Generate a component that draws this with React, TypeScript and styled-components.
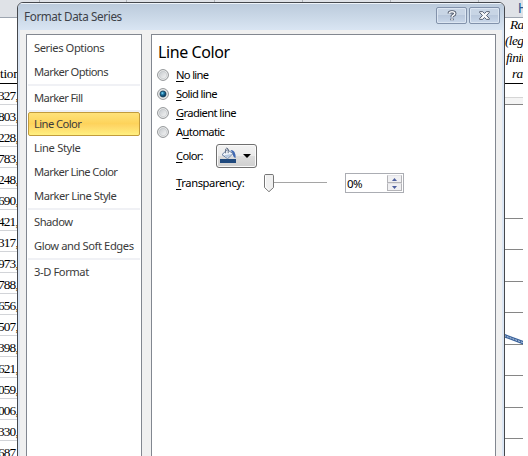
import React, { useState } from 'react';
import styled, { createGlobalStyle, css } from 'styled-components';

const GlobalStyle = createGlobalStyle`
  body { margin: 0; background: #fff; overflow: hidden; }
  *, *::before, *::after { box-sizing: border-box; }
`;

const Screen = styled.div`
  position: relative;
  width: 523px;
  height: 456px;
  overflow: hidden;
  background: #fff;
  color: #000;
  font-family: 'Noto Sans', sans-serif;
  font-size: 12px;
`;

const ColumnHeaders = styled.div`
  display: grid;
  grid-template-columns: 39px 88px 88px 88px 88px 88px 44px;
  height: 18px;
  background: #dfe2e7;
  border-bottom: 1px solid #9da5b0;
`;

const ColumnHeader = styled.div`
  border-right: 1px solid #b1b5ba;
  padding-left: 39px;
  font: 14px/17px 'Liberation Sans', sans-serif;
  color: #2a5a94;
  overflow: hidden;

  &:last-child { border-right: 0; }
`;

const SheetBody = styled.div`
  display: flex;
  justify-content: space-between;
`;

const NumberColumn = styled.div`
  width: 18px;
  font: 13.3px/20px 'Liberation Serif', serif;
`;

const numberText = css`
  display: flex;
  white-space: nowrap;
  overflow: hidden;
`;

const NumberHead = styled.div`
  ${numberText}
  height: 66px;
  align-items: flex-end;
  border-bottom: 1px solid #000;
  line-height: 18px;
  letter-spacing: -0.3px;
`;

const NumberCell = styled.div`
  ${numberText}
  justify-content: flex-end;
  height: 21px;
  padding-top: 2px;
  letter-spacing: -0.8px;
  border-bottom: 1px solid #d2d4d8;
`;

const RightColumn = styled.div`
  width: 18px;
`;

const RatioHead = styled.div`
  height: 66px;
  display: flex;
  flex-direction: column;
  border-bottom: 1px solid #000;
  font: italic 13.3px/16.3px 'Liberation Serif', serif;
  letter-spacing: -0.6px;
  white-space: nowrap;
  overflow: hidden;
`;

const RatioLine = styled.span<{ $indent: number }>`
  padding-left: ${(p) => p.$indent}px;

  &:first-child { margin-top: -1px; }
`;

const ChartDrawing = styled.svg`
  display: block;
`;

const Dialog = styled.section`
  position: absolute;
  left: 17px;
  top: 2px;
  width: 488px;
  height: 470px;
  border: 1px solid #45484d;
  border-radius: 6px 6px 0 0;
  background: #f0f0f0;
  box-shadow: inset 2px 0 #dbe6f4, inset -2px 0 #dbe6f4;
  overflow: hidden;
`;

const TitleBar = styled.header`
  height: 27px;
  display: flex;
  justify-content: space-between;
  padding: 4px 4px 0 6px;
  border-top: 1px solid #eef4fa;
  background: linear-gradient(#bccbdc, #cad8e7 50%, #d9e5f3);
`;

const Title = styled.h1`
  margin: 0;
  font-size: 11.7px;
  line-height: 16px;
  font-weight: 400;
  letter-spacing: -0.38px;
  color: #3d4148;
`;

const CaptionButtons = styled.div`
  display: flex;
  gap: 2px;
  margin-top: -1px;
`;

const CaptionButton = styled.button`
  width: 31px;
  height: 17px;
  padding: 0;
  display: flex;
  align-items: center;
  justify-content: center;
  border: 1px solid #8292ab;
  border-radius: 2px;
  background: linear-gradient(#c8d5e5 45%, #b9c8dc 50%, #cad8ea);
  box-shadow: inset 0 0 0 1px #dce6f2;
`;

const DialogBody = styled.div`
  display: flex;
  gap: 9px;
  padding: 4px 8px 0;
  height: 440px;
`;

const Categories = styled.nav`
  width: 116px;
  flex: none;
  padding: 1px;
  border: 1px solid #828790;
  background: #fff;
`;

const Category = styled.button<{ $active: boolean; $tracking: number }>`
  display: block;
  width: 112px;
  height: 24px;
  padding: 0 0 0 5px;
  border: 1px solid ${(p) => (p.$active ? '#c29b3c' : 'transparent')};
  border-radius: 2px;
  background: ${(p) => (p.$active ? 'linear-gradient(#ffe27a, #fdd35b 48%, #fed767 60%, #fff080)' : 'none')};
  font: 11.2px/22px 'Noto Sans', sans-serif;
  letter-spacing: ${(p) => p.$tracking}px;
  text-align: left;
  white-space: nowrap;
  color: #3b3b3b;
`;

const Divider = styled.div`
  height: 2px;
  background: #f0f1f5;
`;

const Panel = styled.main`
  width: 345px;
  flex: none;
  border: 1px solid #828790;
  background: #fff;
  padding: 5px 0 0 6px;
`;

const PanelTitle = styled.h2`
  margin: 0;
  height: 25px;
  font-size: 16px;
  line-height: 24px;
  font-weight: 400;
  letter-spacing: -0.4px;
`;

const RadioRow = styled.label`
  display: flex;
  align-items: center;
  gap: 7px;
  height: 19px;
`;

const RadioMark = styled.svg`
  flex: none;
  display: block;
  margin-left: -1px;
`;

const Text = styled.span<{ $tracking: number }>`
  font-size: 11.2px;
  line-height: 16px;
  letter-spacing: ${(p) => p.$tracking}px;
  white-space: nowrap;
`;

const Key = styled.u`
  text-underline-offset: 2px;
  text-decoration-thickness: 1px;
  text-decoration-skip-ink: none;
`;

const ColorRow = styled.div`
  display: flex;
  align-items: center;
  height: 25px;
  margin-top: 2px;
  padding-left: 18px;
`;

const Label = styled.div<{ $width: number }>`
  width: ${(p) => p.$width}px;
  display: flex;
`;

const ColorButton = styled.button`
  width: 41px;
  height: 24px;
  padding: 0 0 0 3px;
  display: flex;
  align-items: center;
  gap: 6px;
  border: 1px solid #707070;
  border-radius: 3px;
  background: linear-gradient(#f2f2f2, #ebebeb 48%, #dddddd 50%, #cfcfcf);
  box-shadow: inset 0 0 0 1px #fafafa;
`;

const TransparencyRow = styled.div`
  display: flex;
  align-items: center;
  height: 20px;
  margin-top: 5px;
  padding-left: 18px;
`;

const Slider = styled.svg`
  display: block;
  flex: none;
  margin-right: 17px;
`;

const Spinner = styled.div`
  width: 59px;
  height: 20px;
  display: flex;
  justify-content: space-between;
  padding: 1px;
  border: 1px solid #abadb3;
  background: #fff;
  line-height: 16px;
`;

const SpinnerValue = styled.span`
  font-size: 11.5px;
  line-height: 17px;
  letter-spacing: -0.6px;
`;

const SpinButtons = styled.div`
  display: grid;
  grid-template-rows: 8px 8px;
  width: 15px;
`;

const SpinButton = styled.button`
  display: flex;
  align-items: center;
  justify-content: center;
  padding: 0;
  border: 1px solid #b4b4b8;
  border-top-color: #e2e2e6;
  background: #f0f0f2;
`;

const cells = ['327', '803', '228', '783', '248', '690', '421', '317', '973', '788', '656', '507', '398', '621', '059', '006', '330', '687'];

const categoryGroups: [string, number][][] = [
  [['Series Options', -0.42], ['Marker Options', -0.61]],
  [['Marker Fill', -0.63]],
  [['Line Color', -0.57], ['Line Style', -0.35], ['Marker Line Color', -0.62], ['Marker Line Style', -0.5]],
  [['Shadow', -0.5], ['Glow and Soft Edges', -0.42]],
  [['3-D Format', -0.42]],
];

const lineOptions = [
  { before: '', key: 'N', after: 'o line', tracking: -0.68 },
  { before: '', key: 'S', after: 'olid line', tracking: -0.66 },
  { before: '', key: 'G', after: 'radient line', tracking: -0.6 },
  { before: 'A', key: 'u', after: 'tomatic', tracking: -0.62 },
];

const gridLines = [218, 249, 281, 312, 344, 375, 407, 438];

function Radio({ on }: { on: boolean }) {
  return (
    <RadioMark width="12" height="12" viewBox="0 0 12 12">
      <defs>
        <linearGradient id="radioFace" x1="0" y1="0" x2="1" y2="1">
          <stop offset="0" stopColor="#c4c8cc" />
          <stop offset="1" stopColor="#f7f7f7" />
        </linearGradient>
        <radialGradient id="radioDot" cx="0.4" cy="0.35">
          <stop offset="0" stopColor="#9fe3fa" />
          <stop offset="0.4" stopColor="#2a8dbb" />
          <stop offset="1" stopColor="#0c4267" />
        </radialGradient>
      </defs>
      <circle cx="6" cy="6" r="5.4" fill="#f5f5f5" stroke="#8c8f92" />
      <circle cx="6" cy="6" r="3.8" fill="url(#radioFace)" stroke="#b9bdc1" strokeWidth=".6" />
      {on && <circle cx="6" cy="6" r="3" fill="url(#radioDot)" stroke="#123c58" strokeWidth=".7" />}
    </RadioMark>
  );
}

function HelpIcon() {
  const hook = 'M1.2 3.600Q1.200 1.800 4 1.800T6.800 3.600Q6.800 4.700 5.300 5.300Q4 5.900 4 7.200M4 8.600V10.200';
  return (
    <svg width="8" height="12" viewBox="0 0 8 12" fill="none" overflow="visible">
      <path d={hook} stroke="#4c5466" strokeWidth="3.3" />
      <path d={hook} stroke="#f7f8fa" strokeWidth="1.5" />
    </svg>
  );
}

function CloseIcon() {
  return (
    <svg width="11" height="9" viewBox="0 0 12 10" preserveAspectRatio="none">
      <path
        d="M.7.7H4L6 2.8 8 .7H11.3V1.8L8.2 5 11.3 8.2V9.3H8L6 7.2 4 9.3H.7V8.2L3.8 5 .7 1.8Z"
        fill="#f7f8fa"
        stroke="#50586a"
      />
    </svg>
  );
}

function BucketIcon() {
  return (
    <svg width="17" height="17" viewBox="0 0 17 17">
      <rect x="0" y="12" width="16" height="4" fill="#1f497d" />
      <path d="M10.500 3Q15.800 2.800 15.600 11Q13 10.500 12.500 6Z" fill="#3f69b4" />
      <path d="M7.200 2.600 13 6.600 7.600 11.700 2 7.700Z" fill="#f0f5fb" stroke="#5b7498" strokeWidth=".9" />
      <path d="M4 8.300 11.400 7 7.600 10.700Z" fill="#b4c7df" />
      <path d="M5.600 6.300V2.100Q6.700-.1 8.200 2V6.200" fill="none" stroke="#59677c" strokeWidth=".9" />
    </svg>
  );
}

export default function App() {
  const [category, setCategory] = useState('Line Color');
  const [option, setOption] = useState(1);

  return (
    <>
      <GlobalStyle />
      <Screen>
        <ColumnHeaders>
          {['', '', '', '', '', '', 'H'].map((name, i) => (
            <ColumnHeader key={i}>{name}</ColumnHeader>
          ))}
        </ColumnHeaders>
        <SheetBody>
          <NumberColumn>
            <NumberHead>tion</NumberHead>
            {cells.map((value) => (
              <NumberCell key={value}>{value},</NumberCell>
            ))}
          </NumberColumn>
          <RightColumn>
            <RatioHead>
              <RatioLine $indent={5}>Rap</RatioLine>
              <RatioLine $indent={0}>(lega</RatioLine>
              <RatioLine $indent={1}>finite</RatioLine>
              <RatioLine $indent={7}>rat</RatioLine>
            </RatioHead>
            <ChartDrawing width="18" height="372" viewBox="0 84 18 372">
              <path d="M0 97.5H18" stroke="#d5d5d5" />
              <path d="M0 101H18" stroke="#f4f4f4" strokeWidth="6" />
              <path d="M0 104.5H18" stroke="#868686" />
              {gridLines.map((y) => (
                <path key={y} d={`M0 ${y + 0.5}H18`} stroke="#868686" />
              ))}
              <path d="M-1 335.5 19 343" stroke="#3b639c" strokeWidth="3.4" />
              <path d="M-1 335.5 19 343" stroke="#c5d5ea" strokeWidth="1" strokeDasharray="2 1" />
            </ChartDrawing>
          </RightColumn>
        </SheetBody>

        <Dialog>
          <TitleBar>
            <Title>Format Data Series</Title>
            <CaptionButtons>
              <CaptionButton aria-label="Help"><HelpIcon /></CaptionButton>
              <CaptionButton aria-label="Close"><CloseIcon /></CaptionButton>
            </CaptionButtons>
          </TitleBar>
          <DialogBody>
            <Categories>
              {categoryGroups.map((group, i) => (
                <React.Fragment key={i}>
                  {i > 0 && <Divider />}
                  {group.map(([name, tracking]) => (
                    <Category key={name} $active={name === category} $tracking={tracking} onClick={() => setCategory(name)}>
                      {name}
                    </Category>
                  ))}
                </React.Fragment>
              ))}
            </Categories>
            <Panel>
              <PanelTitle>Line Color</PanelTitle>
              {lineOptions.map((o, i) => (
                <RadioRow key={o.key} onClick={() => setOption(i)}>
                  <Radio on={option === i} />
                  <Text $tracking={o.tracking}>{o.before}<Key>{o.key}</Key>{o.after}</Text>
                </RadioRow>
              ))}
              <ColorRow>
                <Label $width={40}><Text $tracking={-0.7}><Key>C</Key>olor:</Text></Label>
                <ColorButton aria-label="Color">
                  <BucketIcon />
                  <svg width="8" height="4" viewBox="0 0 8 4"><path d="M0 0H8L4 4Z" /></svg>
                </ColorButton>
              </ColorRow>
              <TransparencyRow>
                <Label $width={88}><Text $tracking={-0.4}><Key>T</Key>ransparency:</Text></Label>
                <Slider width="64" height="20" viewBox="0 0 64 20">
                  <path d="M5 9.5H63" stroke="#a5a5a5" />
                  <path d="M.5 2.500Q.5 1.500 2 1.500H8Q9.500 1.500 9.500 2.500V14.500L5 18.700.5 14.500Z" fill="#f0f0f0" stroke="#777" />
                  <path d="M1.500 2.500V14L5 17.300" fill="none" stroke="#fff" />
                </Slider>
                <Spinner>
                  <SpinnerValue>0%</SpinnerValue>
                  <SpinButtons>
                    <SpinButton aria-label="Increase"><svg width="5" height="3"><path d="M0 3 2.500 0 5 3Z" fill="#4d5f9e" /></svg></SpinButton>
                    <SpinButton aria-label="Decrease"><svg width="5" height="3"><path d="M0 0H5L2.500 3Z" fill="#4d5f9e" /></svg></SpinButton>
                  </SpinButtons>
                </Spinner>
              </TransparencyRow>
            </Panel>
          </DialogBody>
        </Dialog>
      </Screen>
    </>
  );
}
